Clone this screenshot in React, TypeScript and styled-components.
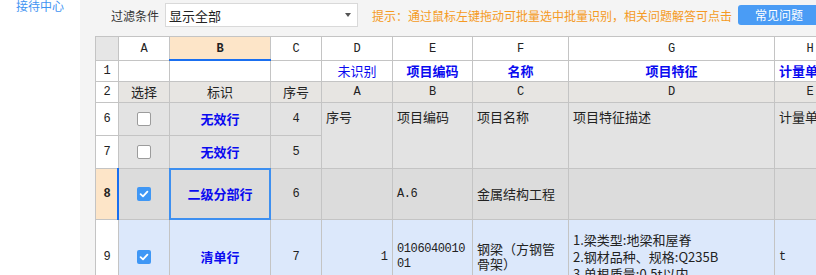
import React from 'react';
import styled, { createGlobalStyle, css } from 'styled-components';

const GlobalStyle = createGlobalStyle`
  html, body { margin: 0; padding: 0; overflow: hidden; background: #fff; }
  body { font-family: "Noto Sans CJK SC", "Liberation Sans", sans-serif; }
  #root { width: 816px; height: 275px; }
`;

const Page = styled.div`
  display: flex;
  width: 816px;
  height: 275px;
  overflow: hidden;
`;

const Sidebar = styled.aside`
  flex: none;
  width: 80px;
  box-sizing: border-box;
  padding-left: 16px;
  background: #fff;
`;

const SideLink = styled.div`
  margin-top: -3px;
  font-size: 12px;
  line-height: 18px;
  color: #3f94f2;
`;

const Main = styled.main`
  flex: 1;
  min-width: 0;
  display: flex;
  flex-direction: column;
  background: #f4f4f4;
  overflow: hidden;
`;

const Toolbar = styled.div`
  flex: none;
  height: 30px;
  display: flex;
  align-items: center;
  padding-left: 31px;
  white-space: nowrap;
`;

const Label = styled.span`
  font-size: 12px;
  color: #333;
  margin-right: 6px;
`;

const Select = styled.div`
  flex: none;
  width: 193px;
  height: 24px;
  box-sizing: border-box;
  display: flex;
  align-items: center;
  justify-content: space-between;
  padding: 0 6px 0 3px;
  border: 1px solid #d9d9d9;
  background: #fff;
  font-size: 13px;
  color: #222;
`;

const Caret = styled.span`
  width: 0;
  height: 0;
  border-left: 3.5px solid transparent;
  border-right: 3.5px solid transparent;
  border-top: 4px solid #555;
`;

const Hint = styled.span`
  margin-left: 14px;
  font-size: 12px;
  color: #f59a23;
`;

const HelpButton = styled.button`
  flex: none;
  margin-left: 6px;
  width: 82px;
  height: 20px;
  padding: 0;
  border: none;
  border-radius: 3px;
  background: #4a9cf5;
  color: #fff;
  font-family: inherit;
  font-size: 12px;
  line-height: 20px;
`;

const SheetArea = styled.div`
  flex: 1;
  padding: 6px 0 0 15px;
  overflow: hidden;
`;

const Sheet = styled.div`
  display: grid;
  width: max-content;
  grid-template-columns: 22px 50px 100px 50px 70px 79px 95px 205px 70px;
  grid-template-rows: 23px 20px 20px 32px 32px 50px 73px;
  gap: 1px;
  background: #c4c4c4;
  border: 1px solid #c4c4c4;
`;

type Tone = 'white' | 'corner' | 'peach' | 'label' | 'gray' | 'dark' | 'blue';

const tones: Record<Tone, string> = {
  white: '#ffffff',
  corner: '#e6e6e6',
  peach: '#fde5c8',
  label: '#e7e5e2',
  gray: '#e3e3e3',
  dark: '#dcdcdc',
  blue: '#dce8fb',
};

const Cell = styled.div<{
  $tone?: Tone;
  $align?: 'center' | 'left' | 'right';
  $valign?: 'center' | 'top';
  $span?: number;
  $selected?: boolean;
  $activeRow?: boolean;
  $activeCol?: boolean;
}>`
  position: relative;
  min-width: 0;
  display: flex;
  box-sizing: border-box;
  padding: ${(p) => (p.$valign === 'top' ? '6px 4px 0' : '0 4px')};
  align-items: ${(p) => (p.$valign === 'top' ? 'flex-start' : 'center')};
  justify-content: ${(p) =>
    p.$align === 'left' ? 'flex-start' : p.$align === 'right' ? 'flex-end' : 'center'};
  background: ${(p) => tones[p.$tone ?? 'white']};
  font-size: 13px;
  line-height: 16px;
  color: #222;
  ${(p) => p.$span && css`grid-row: span ${p.$span};`}
  ${(p) =>
    p.$selected &&
    css`
      &::after {
        content: '';
        position: absolute;
        inset: -1px;
        border: 2px solid #3d8ff0;
        pointer-events: none;
      }
    `}
  ${(p) =>
    p.$activeRow &&
    css`
      &::after {
        content: '';
        position: absolute;
        top: -1px;
        bottom: -1px;
        right: -1px;
        width: 2px;
        background: #1a6ff0;
      }
    `}
  ${(p) =>
    p.$activeCol &&
    css`
      &::after {
        content: '';
        position: absolute;
        left: -1px;
        right: -1px;
        bottom: -1px;
        height: 2px;
        background: #1a6ff0;
      }
    `}
`;

const Letter = styled.span<{ $bold?: boolean }>`
  font-family: "Liberation Mono", monospace;
  font-size: 12px;
  font-weight: ${(p) => (p.$bold ? 700 : 400)};
  color: #222;
`;

const Field = styled.span<{ $bold?: boolean }>`
  color: #0a0af0;
  font-weight: ${(p) => (p.$bold ? 700 : 400)};
  white-space: nowrap;
`;

const Code = styled.span`
  font-family: "Liberation Mono", monospace;
  font-size: 12px;
  letter-spacing: -0.4px;
  line-height: 14.5px;
  word-break: break-all;
`;

const Wrap = styled.span`
  line-height: 14.5px;
`;

const Lines = styled.div`
  display: flex;
  flex-direction: column;
  line-height: 17px;
  white-space: nowrap;
`;

const Box = styled.span<{ $checked?: boolean }>`
  width: 14px;
  height: 14px;
  box-sizing: border-box;
  border-radius: 2px;
  display: flex;
  align-items: center;
  justify-content: center;
  ${(p) =>
    p.$checked
      ? css`
          background: #3f97f5;
        `
      : css`
          background: #fff;
          border: 1px solid #9c9c9c;
        `}
`;

const Checkbox = ({ checked }: { checked?: boolean }) => (
  <Box $checked={checked}>
    {checked && (
      <svg width="10" height="10" viewBox="0 0 10 10">
        <path d="M1.6 5.2 L4 7.4 L8.4 2.6" fill="none" stroke="#fff" strokeWidth="1.8" strokeLinecap="round" strokeLinejoin="round" />
      </svg>
    )}
  </Box>
);

const cols = ['A', 'B', 'C', 'D', 'E', 'F', 'G', 'H'];

export default function App() {
  return (
    <>
      <GlobalStyle />
      <Page>
        <Sidebar>
          <SideLink>接待中心</SideLink>
        </Sidebar>
        <Main>
          <Toolbar>
            <Label>过滤条件</Label>
            <Select>
              <span>显示全部</span>
              <Caret />
            </Select>
            <Hint>提示：通过鼠标左键拖动可批量选中批量识别，相关问题解答可点击</Hint>
            <HelpButton>常见问题</HelpButton>
          </Toolbar>
          <SheetArea>
            <Sheet>
              {/* column headers */}
              <Cell $tone="corner" />
              {cols.map((c) => (
                <Cell key={c} $tone={c === 'B' ? 'peach' : 'white'} $activeCol={c === 'B'}>
                  <Letter $bold={c === 'B'}>{c}</Letter>
                </Cell>
              ))}

              {/* row 1 */}
              <Cell><Letter>1</Letter></Cell>
              <Cell />
              <Cell />
              <Cell />
              <Cell><Field>未识别</Field></Cell>
              <Cell><Field $bold>项目编码</Field></Cell>
              <Cell><Field $bold>名称</Field></Cell>
              <Cell><Field $bold>项目特征</Field></Cell>
              <Cell $align="left"><Field $bold>计量单位</Field></Cell>

              {/* row 2 */}
              <Cell><Letter>2</Letter></Cell>
              <Cell $tone="label">选择</Cell>
              <Cell $tone="label">标识</Cell>
              <Cell $tone="label">序号</Cell>
              {['A', 'B', 'C', 'D', 'E'].map((c) => (
                <Cell key={c} $tone="label"><Letter>{c}</Letter></Cell>
              ))}

              {/* row 6 */}
              <Cell><Letter>6</Letter></Cell>
              <Cell $tone="gray"><Checkbox /></Cell>
              <Cell $tone="gray"><Field $bold>无效行</Field></Cell>
              <Cell $tone="gray"><Letter>4</Letter></Cell>
              <Cell $tone="gray" $span={2} $align="left" $valign="top">序号</Cell>
              <Cell $tone="gray" $span={2} $align="left" $valign="top">项目编码</Cell>
              <Cell $tone="gray" $span={2} $align="left" $valign="top">项目名称</Cell>
              <Cell $tone="gray" $span={2} $align="left" $valign="top">项目特征描述</Cell>
              <Cell $tone="gray" $span={2} $align="left" $valign="top">计量单位</Cell>

              {/* row 7 */}
              <Cell><Letter>7</Letter></Cell>
              <Cell $tone="gray"><Checkbox /></Cell>
              <Cell $tone="gray"><Field $bold>无效行</Field></Cell>
              <Cell $tone="gray"><Letter>5</Letter></Cell>

              {/* row 8 */}
              <Cell $tone="peach" $activeRow><Letter $bold>8</Letter></Cell>
              <Cell $tone="dark"><Checkbox checked /></Cell>
              <Cell $tone="dark" $selected><Field $bold>二级分部行</Field></Cell>
              <Cell $tone="dark"><Letter>6</Letter></Cell>
              <Cell $tone="dark" />
              <Cell $tone="dark" $align="left"><Code>A.6</Code></Cell>
              <Cell $tone="dark" $align="left">金属结构工程</Cell>
              <Cell $tone="dark" />
              <Cell $tone="dark" />

              {/* row 9 */}
              <Cell><Letter>9</Letter></Cell>
              <Cell $tone="blue"><Checkbox checked /></Cell>
              <Cell $tone="blue"><Field $bold>清单行</Field></Cell>
              <Cell $tone="blue"><Letter>7</Letter></Cell>
              <Cell $tone="blue" $align="right"><Letter>1</Letter></Cell>
              <Cell $tone="blue" $align="left"><Code>010604001001</Code></Cell>
              <Cell $tone="blue" $align="left"><Wrap>钢梁（方钢管骨架）</Wrap></Cell>
              <Cell $tone="blue" $align="left">
                <Lines>
                  <span>1.梁类型:地梁和屋脊</span>
                  <span>2.钢材品种、规格:Q235B</span>
                  <span>3.单根质量:0.5t以内</span>
                </Lines>
              </Cell>
              <Cell $tone="blue" $align="left"><Letter>t</Letter></Cell>
            </Sheet>
          </SheetArea>
        </Main>
      </Page>
    </>
  );
}
